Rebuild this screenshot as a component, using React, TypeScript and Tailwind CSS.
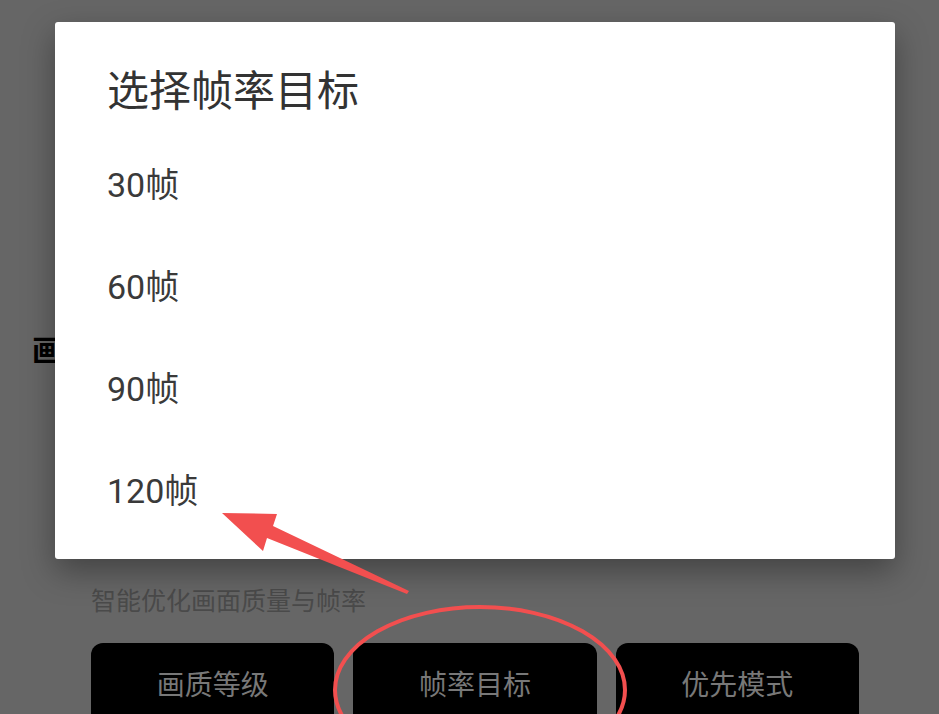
import React from "react";

const font = { fontFamily: 'Roboto, "Noto Sans CJK SC", sans-serif' };

const options = ["30帧", "60帧", "90帧", "120帧"];
const modes = ["画质等级", "帧率目标", "优先模式"];

function Annotations() {
  return (
    <svg
      className="pointer-events-none absolute inset-0 h-full w-full"
      viewBox="0 0 939 714"
      fill="none"
    >
      <polygon
        points="222,513 277,514 273,526 409,591 407,594 267,538 263,551"
        fill="#f24f4f"
      />
      <ellipse cx="480" cy="690" rx="145" ry="83" stroke="#f24f4f" strokeWidth="4" />
    </svg>
  );
}

export default function App() {
  return (
    <div className="relative h-[714px] w-full overflow-hidden bg-[#666666]" style={font}>
      {/* page under the scrim */}
      <div className="flex flex-col">
        <div className="pl-[32px] pt-[330px] text-[30px] font-bold leading-[42px] text-black">
          画质优化
        </div>
        <div className="ml-[91px] mt-[215px] text-[25px] leading-[30px] text-[#4a4a4a]">
          智能优化画面质量与帧率
        </div>
        <div className="ml-[91px] mt-[26px] grid w-[768px] grid-cols-3 gap-[19px]">
          {modes.map((m) => (
            <div
              key={m}
              className="flex h-[86px] items-center justify-center rounded-[12px] bg-black text-[28px] text-[#787878]"
            >
              {m}
            </div>
          ))}
        </div>
      </div>

      {/* dialog */}
      <div className="absolute left-[55px] top-[22px] flex h-[537px] w-[840px] flex-col rounded-[3px] bg-white pl-[52px] shadow-[0_12px_32px_rgba(0,0,0,0.35)]">
        <div className="pt-[45px] text-[42px] leading-[50px] text-[#333333]">选择帧率目标</div>
        <div className="mt-[17px] flex flex-col">
          {options.map((o) => (
            <div key={o} className="flex h-[102px] items-center text-[34px] text-[#3a3a3a]">
              {o}
            </div>
          ))}
        </div>
      </div>

      <Annotations />
    </div>
  );
}
